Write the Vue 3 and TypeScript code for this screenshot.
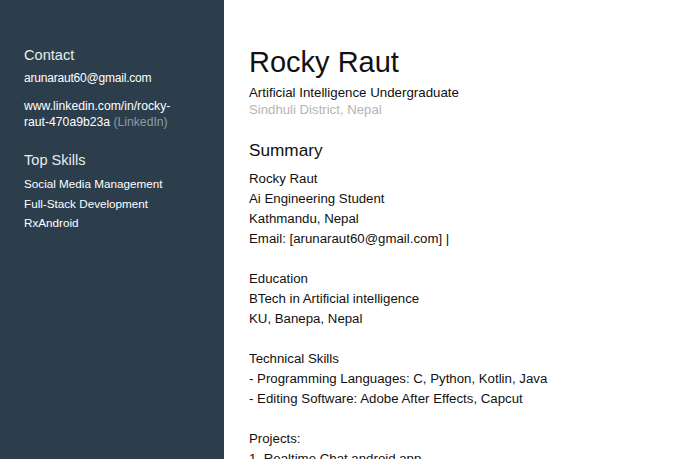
<template>
  <div class="page">
    <aside class="side">
      <h3 class="side-title">Contact</h3>
      <p class="side-line email">arunaraut60@gmail.com</p>
      <p class="side-line link">www.linkedin.com/in/rocky-<br />raut-470a9b23a <span class="muted">(LinkedIn)</span></p>
      <h3 class="side-title skills">Top Skills</h3>
      <p v-for="skill in skills" :key="skill" class="skill">{{ skill }}</p>
    </aside>
    <main class="main">
      <h1 class="name">Rocky Raut</h1>
      <p class="role">Artificial Intelligence Undergraduate</p>
      <p class="place">Sindhuli District, Nepal</p>
      <h2 class="summary">Summary</h2>
      <p v-for="(line, i) in lines" :key="i" class="line">{{ line }}</p>
    </main>
  </div>
</template>

<script setup lang="ts">
const skills: string[] = ["Social Media Management", "Full-Stack Development", "RxAndroid"];

const lines: string[] = [
  "Rocky Raut",
  "Ai Engineering Student",
  "Kathmandu, Nepal",
  "Email: [arunaraut60@gmail.com] |",
  "\u00a0",
  "Education",
  "BTech in Artificial intelligence",
  "KU, Banepa, Nepal",
  "\u00a0",
  "Technical Skills",
  "- Programming Languages: C, Python, Kotlin, Java",
  "- Editing Software: Adobe After Effects, Capcut",
  "\u00a0",
  "Projects:",
  "1. Realtime Chat android app",
];
</script>

<style>
html,
body {
  margin: 0;
  overflow: hidden;
}
</style>

<style scoped>
.page {
  display: flex;
  width: 680px;
  height: 459px;
  overflow: hidden;
  background: #fff;
  font-family: "Liberation Sans", Arial, sans-serif;
  color: #111;
}

.side {
  width: 224px;
  flex-shrink: 0;
  box-sizing: border-box;
  padding: 46px 24px 0;
  background: #2c3e4c;
  color: #fff;
}

.side-title {
  margin: 0 0 6px;
  font-size: 14.6px;
  line-height: 18px;
  font-weight: 400;
  color: #e8ecef;
}

.side-title.skills {
  margin-top: 21px;
  margin-bottom: 5px;
}

.side-line {
  margin: 0 0 12px;
  font-size: 12.2px;
  line-height: 16px;
}

.side-line.email {
  font-size: 12px;
  letter-spacing: -0.2px;
}

.muted {
  color: #8f9ca6;
}

.skill {
  margin: 0;
  font-size: 11.7px;
  line-height: 19.5px;
}

.main {
  flex: 1;
  padding: 44px 0 0 25px;
}

.name {
  margin: 0;
  font-size: 29px;
  line-height: 36px;
  font-weight: 400;
  color: #111;
}

.role {
  margin: 4px 0 0;
  font-size: 13.3px;
  line-height: 17px;
}

.place {
  margin: 0;
  font-size: 13.2px;
  line-height: 17px;
  color: #b5b5b5;
}

.summary {
  margin: 21px 0 8px;
  font-size: 17.2px;
  line-height: 22px;
  font-weight: 400;
}

.line {
  margin: 0;
  font-size: 13.25px;
  line-height: 20px;
  white-space: pre;
}
</style>
